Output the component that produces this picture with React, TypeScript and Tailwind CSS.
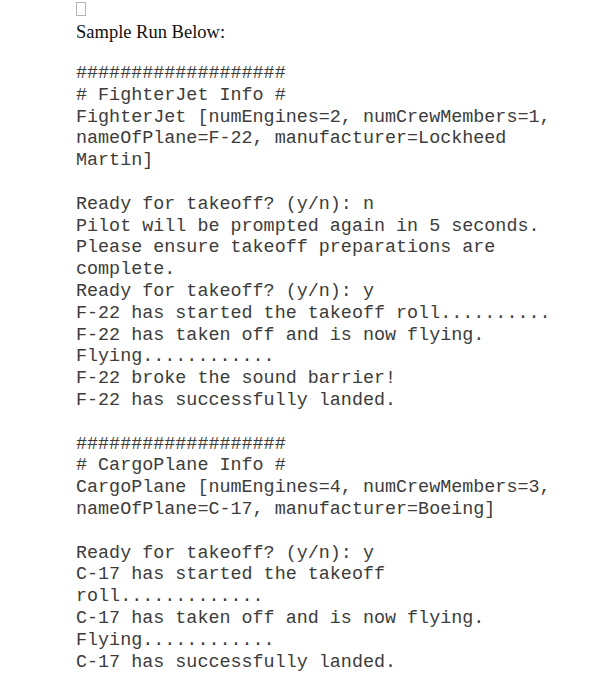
import React from "react";

const lines = [
  "###################",
  "# FighterJet Info #",
  "FighterJet [numEngines=2, numCrewMembers=1,",
  "nameOfPlane=F-22, manufacturer=Lockheed",
  "Martin]",
  "",
  "Ready for takeoff? (y/n): n",
  "Pilot will be prompted again in 5 seconds.",
  "Please ensure takeoff preparations are",
  "complete.",
  "Ready for takeoff? (y/n): y",
  "F-22 has started the takeoff roll..........",
  "F-22 has taken off and is now flying.",
  "Flying............",
  "F-22 broke the sound barrier!",
  "F-22 has successfully landed.",
  "",
  "###################",
  "# CargoPlane Info #",
  "CargoPlane [numEngines=4, numCrewMembers=3,",
  "nameOfPlane=C-17, manufacturer=Boeing]",
  "",
  "Ready for takeoff? (y/n): y",
  "C-17 has started the takeoff",
  "roll.............",
  "C-17 has taken off and is now flying.",
  "Flying............",
  "C-17 has successfully landed.",
];

export default function App() {
  return (
    <div className="w-[591px] h-[700px] bg-white overflow-hidden pl-[76px]">
      <div className="pt-[2px]">
        <div className="w-[10px] h-[14px] border border-[#b5b5b5] bg-white" />
      </div>
      <div
        className="mt-[5px] text-[18.5px] leading-[22px] text-[#111]"
        style={{ fontFamily: '"Liberation Serif", "Times New Roman", serif' }}
      >
        Sample Run Below:
      </div>
      <div
        className="mt-[20px] text-[18.4px] leading-[21.8px] text-[#3c3c3c] whitespace-pre"
        style={{ fontFamily: '"Liberation Mono", "Courier New", monospace' }}
      >
        {lines.map((l, i) => (
          <div key={i} className="h-[21.8px]">
            {l}
          </div>
        ))}
      </div>
    </div>
  );
}
